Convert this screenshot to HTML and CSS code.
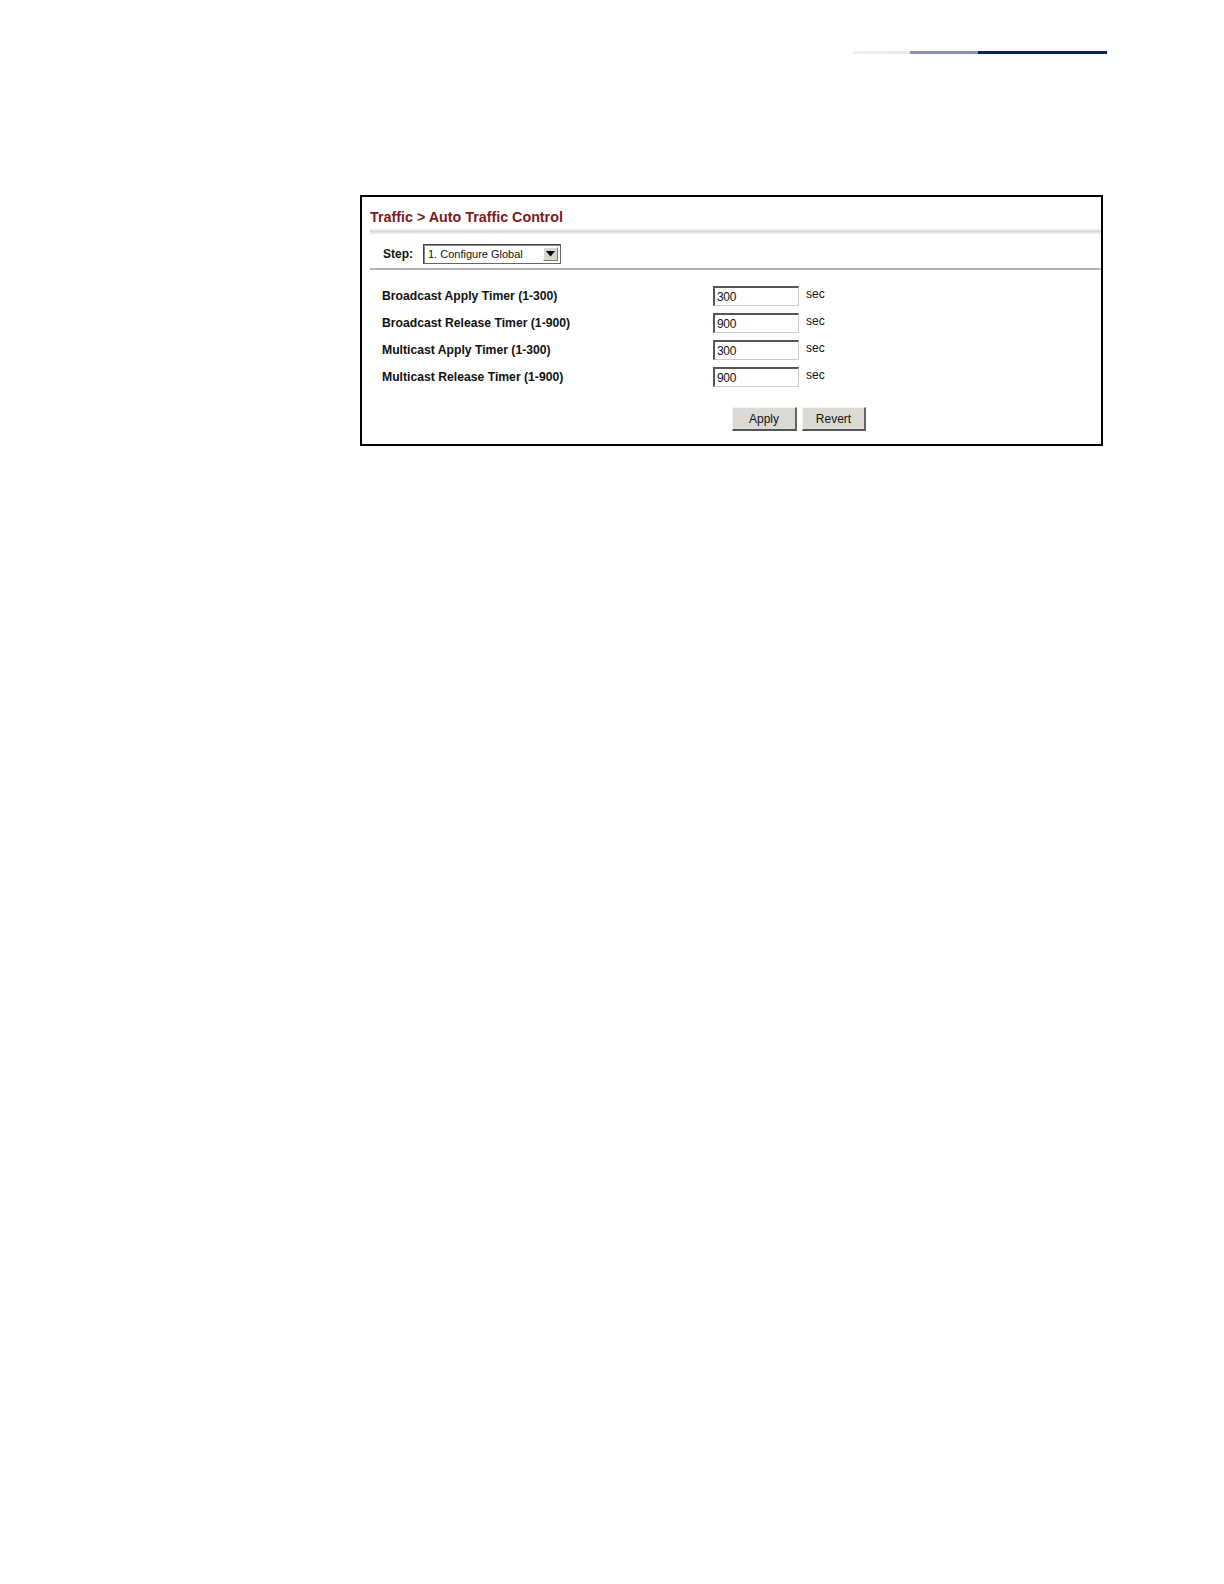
FILE: index.html
```html
<!DOCTYPE html>
<html>
<head>
<meta charset="utf-8">
<link rel="stylesheet" href="styles.css">
</head>
<body>
<div class="topbar">
  <span class="seg seg1"></span><span class="seg seg2"></span><span class="seg seg3"></span>
</div>
<div class="panel">
  <div class="title">Traffic &gt; Auto Traffic Control</div>
  <div class="sep"></div>
  <div class="step">
    <span class="step-label">Step:</span>
    <div class="select">
      <span class="select-text">1. Configure Global</span>
      <span class="select-btn"><svg width="9" height="6" viewBox="0 0 9 6"><path d="M0 0 H9 L4.5 5.5 Z" fill="#000"/></svg></span>
    </div>
  </div>
  <div class="rule"></div>
  <div class="rows">
    <div class="row"><span class="label">Broadcast Apply Timer (1-300)</span><span class="input">300</span><span class="unit">sec</span></div>
    <div class="row"><span class="label">Broadcast Release Timer (1-900)</span><span class="input">900</span><span class="unit">sec</span></div>
    <div class="row"><span class="label">Multicast Apply Timer (1-300)</span><span class="input">300</span><span class="unit">sec</span></div>
    <div class="row"><span class="label">Multicast Release Timer (1-900)</span><span class="input">900</span><span class="unit">sec</span></div>
  </div>
  <div class="buttons">
    <span class="btn btn-apply">Apply</span>
    <span class="btn btn-revert">Revert</span>
  </div>
</div>
</body>
</html>
```
FILE: styles.css
```css
html, body {
  margin: 0;
  padding: 0;
  background: #fff;
}
body {
  font-family: "Liberation Sans", Arial, sans-serif;
  overflow: hidden;
}
.topbar {
  display: flex;
  justify-content: flex-end;
  padding: 51px 117px 0 0;
  height: 3px;
}
.seg { display: block; height: 3px; }
.seg1 { width: 57px; background: linear-gradient(to right, #eff0f3, #e6e8ee); }
.seg2 { width: 68px; background: #8890a8; }
.seg3 { width: 129px; background: #0c2262; }

.panel {
  margin: 141px 0 0 360px;
  width: 739px;
  height: 247px;
  border: 2px solid #000;
  display: flex;
  flex-direction: column;
}
.title {
  margin: 11px 0 0 8px;
  font-size: 14.3px;
  font-weight: bold;
  color: #7b1a1e;
  line-height: 18px;
}
.sep {
  margin: 3px 0 0 8px;
  height: 5px;
  background: linear-gradient(to bottom, #f4f4f4, #d8d8d8 50%, #f4f4f4);
}
.step {
  display: flex;
  align-items: center;
  margin: 9px 0 0 21px;
  height: 21px;
}
.step-label {
  font-size: 12px;
  font-weight: bold;
  color: #111;
  width: 40px;
}
.select {
  display: flex;
  align-items: center;
  width: 136px;
  height: 18px;
  border: 1px solid #666;
  border-top-color: #444;
  border-left-color: #444;
  box-shadow: inset 1px 1px 0 #888;
  background: #fff;
}
.select-text {
  flex: 1;
  font-size: 11px;
  padding-left: 4px;
  color: #111;
}
.select-btn {
  width: 15px;
  height: 14px;
  margin-right: 2px;
  background: #d8d6d0;
  border: 1px solid #fff;
  border-right-color: #777;
  border-bottom-color: #777;
  display: flex;
  align-items: center;
  justify-content: center;
  box-sizing: border-box;
}
.rule {
  margin: 4px 0 0 8px;
  height: 2px;
  background: #b4b4b4;
}
.rows {
  display: flex;
  flex-direction: column;
  margin-top: 16px;
  gap: 7px;
}
.row {
  display: flex;
  align-items: center;
  height: 20px;
}
.label {
  width: 331px;
  padding-left: 20px;
  font-size: 12.2px;
  font-weight: bold;
  color: #111;
}
.input {
  box-sizing: border-box;
  width: 86px;
  height: 20px;
  border: 1px solid #ccc;
  border-top: 2px solid #555;
  border-left: 2px solid #555;
  font-size: 12px;
  padding: 2px 0 0 2px;
  color: #111;
  letter-spacing: -0.3px;
}
.unit {
  margin-left: 7px;
  font-size: 12px;
  color: #111;
  position: relative;
  top: -2px;
}
.buttons {
  display: flex;
  margin: 20px 0 0 370px;
  gap: 5px;
}
.btn {
  box-sizing: border-box;
  height: 24px;
  display: flex;
  align-items: center;
  justify-content: center;
  font-size: 12px;
  color: #111;
  background: #dcdad4;
  border: 1px solid #f4f4f4;
  border-right: 2px solid #666;
  border-bottom: 2px solid #555;
}
.btn-apply { width: 65px; }
.btn-revert { width: 64px; }
```
